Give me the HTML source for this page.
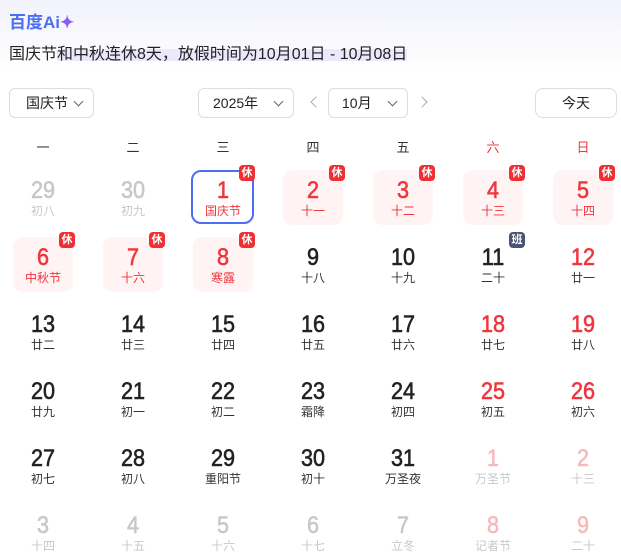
<!DOCTYPE html>
<html><head><meta charset="utf-8"><style>
*{margin:0;padding:0;box-sizing:border-box}
body{width:621px;height:558px;overflow:hidden;background:#fff;font-family:"Liberation Sans","Noto Sans CJK SC",sans-serif;position:relative;color:#222}
.top{position:absolute;left:0;top:0;width:621px;height:70px;background:linear-gradient(180deg,#f1f2fb 0%,#fff 100%)}
.logo{position:absolute;left:9px;top:8px;font-size:17px;font-weight:bold;color:#4e6ef2}
.logo span{color:#8a5cf6}
.title{position:absolute;left:9px;top:40px;font-size:16px;color:#222;white-space:nowrap}
.hl{position:absolute;left:57px;top:49px;width:350px;height:12px;background:#ece8fb}
.sel{position:absolute;top:88px;height:30px;border:1px solid #ddd;border-radius:6px;font-size:14px;line-height:28px;color:#222}
.chev{position:absolute;top:9px;width:7px;height:7px;border-right:1.3px solid #666;border-bottom:1.3px solid #666;transform:rotate(45deg)}
.arr{position:absolute;top:98px;width:8px;height:8px;border-left:1.3px solid #aaa;border-bottom:1.3px solid #aaa}
.wk{position:absolute;top:137px;width:90px;text-align:center;font-size:13px;color:#333}
.c{position:absolute;width:90px;text-align:center}
.n{font-size:24px;line-height:24px;height:24px;font-family:"Liberation Sans",sans-serif;-webkit-text-stroke:0.6px currentColor;color:#222;transform:scaleX(0.9)}
.l{font-size:12px;line-height:14px;margin-top:1px;color:#333}
.r .n,.r .l{color:#f0353d}
.g .n,.g .l{color:#c8c8c8}
.p .n{color:#f7b9bb}.p .l{color:#c8c8c8}
.box{position:absolute;width:60px;height:55px;background:#fff3f3;border-radius:10px}
.cur{background:#fff;border:2px solid #4e6ef2}
.b{position:absolute;width:16px;height:16px;border-radius:4px;background:#ee2f33;color:#fff;font-size:11px;line-height:16px;text-align:center;font-weight:bold}
.bb{background:#4a5473}
</style></head><body>
<div class="top"></div>
<div class="logo">百度Ai<span>✦</span></div>
<div class="hl"></div>
<div class="title">国庆节和中秋连休8天，放假时间为10月01日 - 10月08日</div>

<div class="sel" style="left:9px;width:85px;padding-left:16px">国庆节<div class="chev" style="left:65px"></div></div>
<div class="sel" style="left:198px;width:96px;padding-left:14px">2025年<div class="chev" style="left:76px"></div></div>
<div class="arr" style="left:312px;transform:rotate(45deg)"></div>
<div class="sel" style="left:328px;width:80px;padding-left:13px">10月<div class="chev" style="left:60px"></div></div>
<div class="arr" style="left:418px;transform:rotate(-135deg)"></div>
<div class="sel" style="left:535px;width:82px;text-align:center;border-radius:8px">今天</div>

<div class="wk" style="left:-2px">一</div><div class="wk" style="left:88px">二</div><div class="wk" style="left:178px">三</div><div class="wk" style="left:268px">四</div><div class="wk" style="left:358px">五</div><div class="wk" style="left:448px;color:#f0353d">六</div><div class="wk" style="left:538px;color:#f0353d">日</div>

<div class="box cur" style="left:191px;top:170px;width:63px;height:54px"></div>
<div class="box" style="left:283px;top:170px"></div>
<div class="box" style="left:373px;top:170px"></div>
<div class="box" style="left:463px;top:170px"></div>
<div class="box" style="left:553px;top:170px"></div>
<div class="box" style="left:13px;top:237px"></div>
<div class="box" style="left:103px;top:237px"></div>
<div class="box" style="left:193px;top:237px"></div>

<div class="c g" style="left:-2px;top:179px"><div class="n">29</div><div class="l">初八</div></div>
<div class="c g" style="left:88px;top:179px"><div class="n">30</div><div class="l">初九</div></div>
<div class="c r" style="left:178px;top:179px"><div class="n">1</div><div class="l">国庆节</div></div>
<div class="c r" style="left:268px;top:179px"><div class="n">2</div><div class="l">十一</div></div>
<div class="c r" style="left:358px;top:179px"><div class="n">3</div><div class="l">十二</div></div>
<div class="c r" style="left:448px;top:179px"><div class="n">4</div><div class="l">十三</div></div>
<div class="c r" style="left:538px;top:179px"><div class="n">5</div><div class="l">十四</div></div>

<div class="c r" style="left:-2px;top:246px"><div class="n">6</div><div class="l">中秋节</div></div>
<div class="c r" style="left:88px;top:246px"><div class="n">7</div><div class="l">十六</div></div>
<div class="c r" style="left:178px;top:246px"><div class="n">8</div><div class="l">寒露</div></div>
<div class="c" style="left:268px;top:246px"><div class="n">9</div><div class="l">十八</div></div>
<div class="c" style="left:358px;top:246px"><div class="n">10</div><div class="l">十九</div></div>
<div class="c" style="left:448px;top:246px"><div class="n">11</div><div class="l">二十</div></div>
<div class="c" style="left:538px;top:246px"><div class="n" style="color:#f0353d">12</div><div class="l">廿一</div></div>

<div class="c" style="left:-2px;top:313px"><div class="n">13</div><div class="l">廿二</div></div>
<div class="c" style="left:88px;top:313px"><div class="n">14</div><div class="l">廿三</div></div>
<div class="c" style="left:178px;top:313px"><div class="n">15</div><div class="l">廿四</div></div>
<div class="c" style="left:268px;top:313px"><div class="n">16</div><div class="l">廿五</div></div>
<div class="c" style="left:358px;top:313px"><div class="n">17</div><div class="l">廿六</div></div>
<div class="c" style="left:448px;top:313px"><div class="n" style="color:#f0353d">18</div><div class="l">廿七</div></div>
<div class="c" style="left:538px;top:313px"><div class="n" style="color:#f0353d">19</div><div class="l">廿八</div></div>

<div class="c" style="left:-2px;top:380px"><div class="n">20</div><div class="l">廿九</div></div>
<div class="c" style="left:88px;top:380px"><div class="n">21</div><div class="l">初一</div></div>
<div class="c" style="left:178px;top:380px"><div class="n">22</div><div class="l">初二</div></div>
<div class="c" style="left:268px;top:380px"><div class="n">23</div><div class="l">霜降</div></div>
<div class="c" style="left:358px;top:380px"><div class="n">24</div><div class="l">初四</div></div>
<div class="c" style="left:448px;top:380px"><div class="n" style="color:#f0353d">25</div><div class="l">初五</div></div>
<div class="c" style="left:538px;top:380px"><div class="n" style="color:#f0353d">26</div><div class="l">初六</div></div>

<div class="c" style="left:-2px;top:447px"><div class="n">27</div><div class="l">初七</div></div>
<div class="c" style="left:88px;top:447px"><div class="n">28</div><div class="l">初八</div></div>
<div class="c" style="left:178px;top:447px"><div class="n">29</div><div class="l">重阳节</div></div>
<div class="c" style="left:268px;top:447px"><div class="n">30</div><div class="l">初十</div></div>
<div class="c" style="left:358px;top:447px"><div class="n">31</div><div class="l">万圣夜</div></div>
<div class="c p" style="left:448px;top:447px"><div class="n">1</div><div class="l">万圣节</div></div>
<div class="c p" style="left:538px;top:447px"><div class="n">2</div><div class="l">十三</div></div>

<div class="c g" style="left:-2px;top:514px"><div class="n">3</div><div class="l">十四</div></div>
<div class="c g" style="left:88px;top:514px"><div class="n">4</div><div class="l">十五</div></div>
<div class="c g" style="left:178px;top:514px"><div class="n">5</div><div class="l">十六</div></div>
<div class="c g" style="left:268px;top:514px"><div class="n">6</div><div class="l">十七</div></div>
<div class="c g" style="left:358px;top:514px"><div class="n">7</div><div class="l">立冬</div></div>
<div class="c p" style="left:448px;top:514px"><div class="n">8</div><div class="l">记者节</div></div>
<div class="c p" style="left:538px;top:514px"><div class="n">9</div><div class="l">二十</div></div>

<div class="b" style="left:239px;top:165px">休</div>
<div class="b" style="left:329px;top:165px">休</div>
<div class="b" style="left:419px;top:165px">休</div>
<div class="b" style="left:509px;top:165px">休</div>
<div class="b" style="left:599px;top:165px">休</div>
<div class="b" style="left:59px;top:232px">休</div>
<div class="b" style="left:149px;top:232px">休</div>
<div class="b" style="left:239px;top:232px">休</div>
<div class="b bb" style="left:509px;top:232px">班</div>
</body></html>
